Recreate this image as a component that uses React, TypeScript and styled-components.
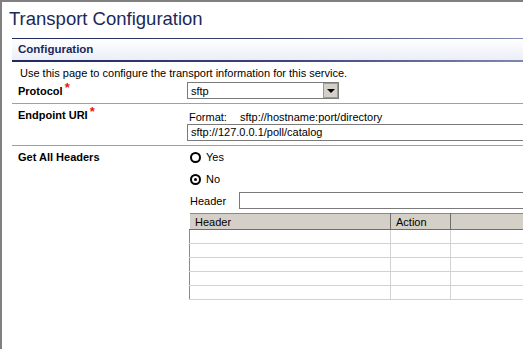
import React from "react";
import styled, { createGlobalStyle } from "styled-components";

const HEADER_ROWS = [1, 2, 3, 4, 5];

const GlobalStyle = createGlobalStyle`
  html, body {
    margin: 0;
    padding: 0;
    background: #fff;
  }
  body {
    font-family: "Liberation Sans", Arial, sans-serif;
    font-size: 11px;
    color: #000;
  }
`;

function App() {
  return (
    <Frame>
      <GlobalStyle />
      <PageTitle>Transport Configuration</PageTitle>
      <Section>
        <SectionHeader>Configuration</SectionHeader>
        <Intro>Use this page to configure the transport information for this service.</Intro>
        <FormRow $pad="2px 0 4px">
          <Label $lh={17}>
            Protocol<Req>*</Req>
          </Label>
          <Controls>
            <Select>
              <SelectText>sftp</SelectText>
              <DropButton>
                <Arrow />
              </DropButton>
            </Select>
          </Controls>
        </FormRow>
        <FormRow $pad="4px 0 4px">
          <Label>
            Endpoint URI<Req>*</Req>
          </Label>
          <Controls>
            <Hint>
              <span>Format:</span>
              <HintValue>sftp://hostname:port/directory</HintValue>
            </Hint>
            <TextInput>sftp://127.0.0.1/poll/catalog</TextInput>
          </Controls>
        </FormRow>
        <FormRow $pad="4px 0 0" $last>
          <Label>Get All Headers</Label>
          <Controls>
            <RadioLine>
              <Radio />
              Yes
            </RadioLine>
            <RadioLine>
              <Radio $checked />
              No
            </RadioLine>
            <HeaderLine>
              <span>Header</span>
              <HeaderInput />
            </HeaderLine>
            <Grid>
              <thead>
                <tr>
                  <Th $w={201}>Header</Th>
                  <Th $w={60}>Action</Th>
                  <Th>&nbsp;</Th>
                </tr>
              </thead>
              <tbody>
                {HEADER_ROWS.map((r) => (
                  <tr key={r}>
                    <Td />
                    <Td />
                    <Td />
                  </tr>
                ))}
              </tbody>
            </Grid>
          </Controls>
        </FormRow>
      </Section>
    </Frame>
  );
}

export default App;

const Frame = styled.div`
  box-sizing: border-box;
  width: 100vw;
  height: 100vh;
  overflow: hidden;
  border-top: 2px solid #808080;
  border-left: 2px solid #808080;
`;

const PageTitle = styled.div`
  font-size: 18.5px;
  line-height: 22px;
  color: #1b2859;
  padding: 6px 0 0 7px;
  height: 30px;
`;

const Section = styled.div`
  margin-left: 10px;
  width: 560px;
`;

const SectionHeader = styled.div`
  height: 21px;
  line-height: 21px;
  border-top: 1px solid #c4c6d2;
  background: linear-gradient(to bottom, #ffffff 0%, #eceef7 100%);
  font-weight: bold;
  font-size: 11.5px;
  color: #1b2859;
  padding-left: 6px;
  border-bottom: 2px solid transparent;
  border-image: linear-gradient(to right, #1e2a60, #3c4678 50%, #8e94bb) 1;
`;

const Intro = styled.div`
  padding: 4px 0 0 8px;
  height: 14px;
  line-height: 14px;
`;

const FormRow = styled.div<{ $pad: string; $last?: boolean }>`
  display: grid;
  grid-template-columns: 175px 1fr;
  border-bottom: ${(p) => (p.$last ? "none" : "1px solid #a0a0a0")};
  padding: ${(p) => p.$pad};
`;

const Label = styled.div<{ $lh?: number }>`
  font-weight: bold;
  padding-left: 6px;
  line-height: ${(p) => p.$lh || 14}px;
  height: ${(p) => p.$lh || 14}px;
`;

const Req = styled.span`
  color: #e8140c;
  font-size: 13px;
  position: relative;
  top: -3px;
  margin-left: 2px;
`;

const Controls = styled.div`
  display: flex;
  flex-direction: column;
  align-items: flex-start;
`;

const Select = styled.div`
  box-sizing: border-box;
  width: 152px;
  height: 17px;
  border: 1px solid #7a7a7a;
  display: flex;
  align-items: center;
  justify-content: space-between;
  background: #fff;
`;

const SelectText = styled.span`
  padding-left: 3px;
`;

const DropButton = styled.div`
  box-sizing: border-box;
  width: 15px;
  height: 15px;
  background: #d4d0c8;
  border: 1px solid #9c9a94;
  display: flex;
  align-items: center;
  justify-content: center;
`;

const Arrow = styled.span`
  width: 0;
  height: 0;
  border-left: 4px solid transparent;
  border-right: 4px solid transparent;
  border-top: 4px solid #000;
  margin-top: 1px;
`;

const Hint = styled.div`
  padding-left: 2px;
  height: 14px;
  line-height: 14px;
  margin-top: 2px;
`;

const HintValue = styled.span`
  margin-left: 13px;
`;

const TextInput = styled.div`
  box-sizing: border-box;
  width: 360px;
  height: 17px;
  line-height: 15px;
  border: 1px solid #7a7a7a;
  padding-left: 3px;
`;

const RadioLine = styled.div`
  display: flex;
  align-items: center;
  gap: 5px;
  height: 14px;
  margin-bottom: 8px;
  padding-left: 3px;
`;

const Radio = styled.span<{ $checked?: boolean }>`
  box-sizing: border-box;
  width: 11px;
  height: 11px;
  border: 2px solid #000;
  border-radius: 50%;
  display: flex;
  align-items: center;
  justify-content: center;
  &::after {
    content: "";
    display: ${(p) => (p.$checked ? "block" : "none")};
    width: 3px;
    height: 3px;
    border-radius: 50%;
    background: #000;
  }
`;

const HeaderLine = styled.div`
  display: flex;
  align-items: center;
  gap: 13px;
  padding-left: 3px;
  margin-top: -2px;
`;

const HeaderInput = styled.div`
  box-sizing: border-box;
  width: 320px;
  height: 17px;
  border: 1px solid #7a7a7a;
`;

const Grid = styled.table`
  margin-top: 4px;
  margin-left: 2px;
  width: 360px;
  border-collapse: collapse;
  border: 1px solid #8a8a8a;
  table-layout: fixed;
`;

const Th = styled.th<{ $w?: number }>`
  width: ${(p) => (p.$w ? `${p.$w}px` : "auto")};
  height: 16px;
  padding: 0 0 0 5px;
  background: #d4d0c8;
  font-weight: normal;
  text-align: left;
  border-left: 1px solid #ffffff;
  border-right: 1px solid #6f6d68;
  border-bottom: 1px solid #6f6d68;
  box-sizing: border-box;
`;

const Td = styled.td`
  height: 13px;
  padding: 0;
  border-right: 1px solid #d2d2d2;
  border-bottom: 1px solid #d2d2d2;
`;
